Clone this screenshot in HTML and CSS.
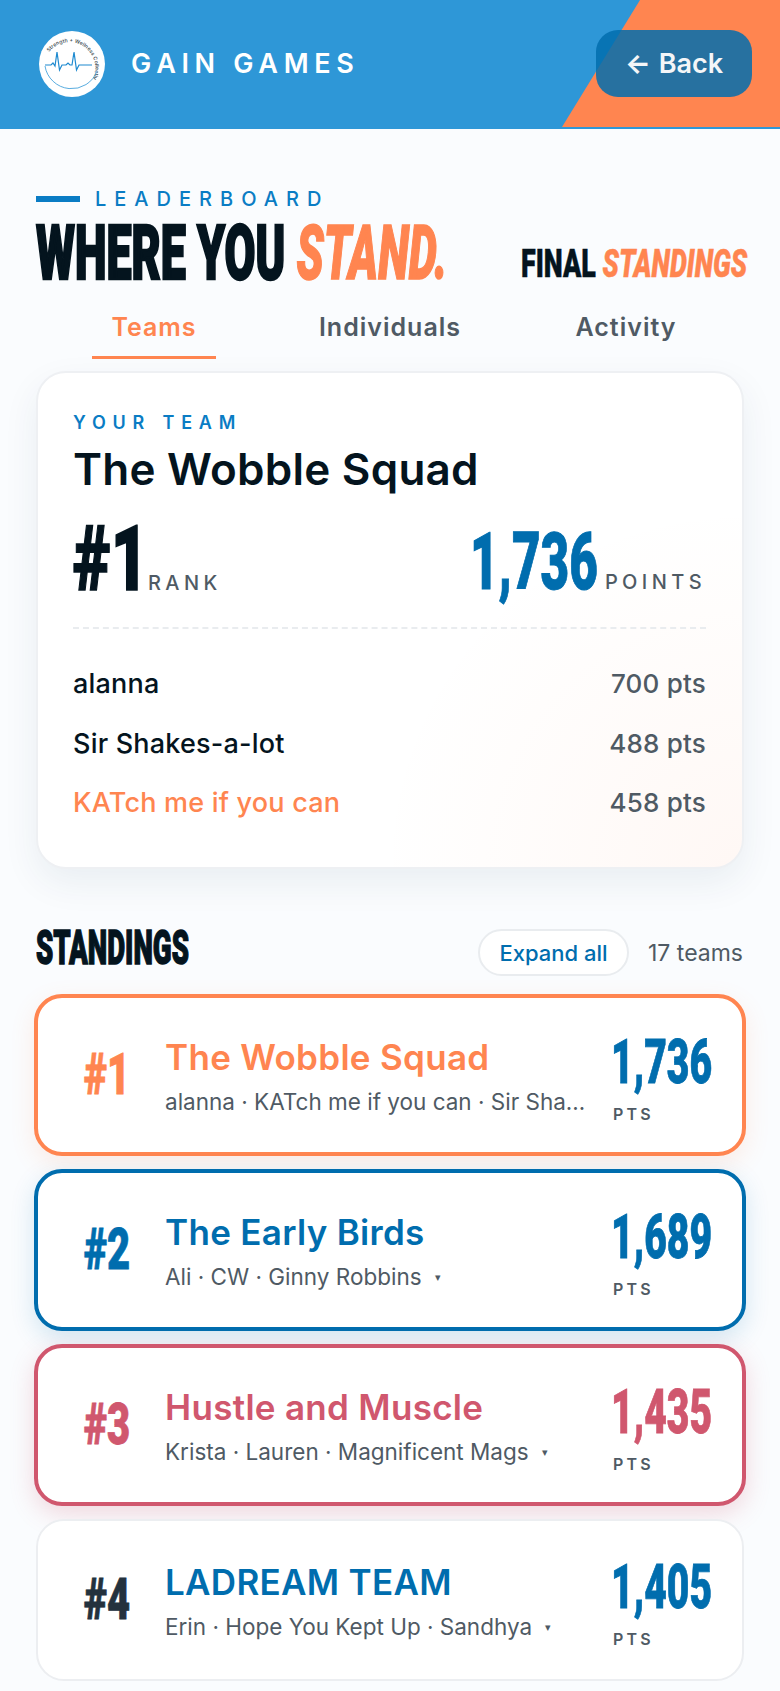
FILE: index.html
```html
<!DOCTYPE html>
<html lang="en">
<head>
<meta charset="utf-8">
<title>Gain Games – Leaderboard</title>
<link rel="stylesheet" href="styles.css">
</head>
<body>
<header class="topbar">
  <div class="brand">
    <svg class="logo" viewBox="0 0 66 66" aria-label="Strength + Wellness Collective">
      <circle cx="33" cy="33" r="33" fill="#fff"/>
      <defs><path id="logo-arc" d="M10 21 A26 26 0 0 1 54 48"/></defs>
      <text class="logo-text"><textPath href="#logo-arc" textLength="78">Strength + Wellness Collective</textPath></text>
      <path class="logo-arc" d="M6 35 A27 27 0 0 0 58 40"/>
      <path class="logo-beat" d="M6 34 H12 L14 32 L16 35 L18 21 L20.5 39 L23 34 H27 L29 32 L31 34 H33 L35 21 L37.5 39 L40 34 H53"/>
    </svg>
    <span class="brand-name">GAIN GAMES</span>
  </div>
  <a class="back-btn"><span class="back-arrow">←</span> Back</a>
</header>

<main class="page">
  <p class="eyebrow">LEADERBOARD</p>
  <div class="title-row">
    <h1 class="title"><span class="cond cond-title">WHERE YOU <em>STAND.</em></span></h1>
    <p class="final"><span class="cond cond-final">FINAL <em>STANDINGS</em></span></p>
  </div>

  <nav class="tabs">
    <a class="tab tab-active">Teams</a>
    <a class="tab">Individuals</a>
    <a class="tab">Activity</a>
  </nav>

  <section class="team-card">
    <p class="team-label">YOUR TEAM</p>
    <h2 class="team-name">The Wobble Squad</h2>
    <div class="team-stats">
      <div class="stat"><span class="stat-big stat-rank"><span class="cond cond-rank">#1</span></span><span class="stat-unit">RANK</span></div>
      <div class="stat"><span class="stat-big stat-blue"><span class="cond cond-pts">1,736</span></span><span class="stat-unit">POINTS</span></div>
    </div>
    <ul class="members">
      <li class="member"><span>alanna</span><span class="member-pts">700 pts</span></li>
      <li class="member"><span>Sir Shakes-a-lot</span><span class="member-pts">488 pts</span></li>
      <li class="member member-me"><span>KATch me if you can</span><span class="member-pts">458 pts</span></li>
    </ul>
  </section>

  <div class="standings-head">
    <h3 class="standings-title"><span class="cond cond-standings">STANDINGS</span></h3>
    <div class="standings-tools">
      <button class="expand">Expand all</button>
      <span class="count">17 teams</span>
    </div>
  </div>

  <div class="rows">
    <article class="row row-orange">
      <div class="rank"><span class="rank-text">#1</span></div>
      <div class="info">
        <div class="name">The Wobble Squad</div>
        <div class="people"><span class="people-text">alanna · KATch me if you can · Sir Shakes-a-lot</span></div>
      </div>
      <div class="score"><div class="score-num"><span class="cond cond-score">1,736</span></div><div class="score-unit">PTS</div></div>
    </article>
    <article class="row row-blue">
      <div class="rank"><span class="rank-text">#2</span></div>
      <div class="info">
        <div class="name">The Early Birds</div>
        <div class="people"><span class="people-text">Ali · CW · Ginny Robbins</span><span class="caret">▾</span></div>
      </div>
      <div class="score"><div class="score-num"><span class="cond cond-score">1,689</span></div><div class="score-unit">PTS</div></div>
    </article>
    <article class="row row-red">
      <div class="rank"><span class="rank-text">#3</span></div>
      <div class="info">
        <div class="name">Hustle and Muscle</div>
        <div class="people"><span class="people-text">Krista · Lauren · Magnificent Mags</span><span class="caret">▾</span></div>
      </div>
      <div class="score"><div class="score-num"><span class="cond cond-score">1,435</span></div><div class="score-unit">PTS</div></div>
    </article>
    <article class="row row-plain">
      <div class="rank"><span class="rank-text">#4</span></div>
      <div class="info">
        <div class="name">LADREAM TEAM</div>
        <div class="people"><span class="people-text">Erin · Hope You Kept Up · Sandhya</span><span class="caret">▾</span></div>
      </div>
      <div class="score"><div class="score-num"><span class="cond cond-score">1,405</span></div><div class="score-unit">PTS</div></div>
    </article>
  </div>
</main>
</body>
</html>
```
FILE: styles.css
```css
* { box-sizing: border-box; }
html, body { margin: 0; padding: 0; }
body {
  background: #fafcfe;
  font-family: Inter, "Noto Sans", sans-serif;
  color: #04141e;
  width: 780px;
  height: 1691px;
  overflow: hidden;
}
p, h1, h2, h3, ul { margin: 0; padding: 0; }

/* condensed display type: Roboto Black squeezed horizontally */
.cond {
  display: block;
  white-space: nowrap;
  transform-origin: 0 50%;
  font-family: Roboto, "Liberation Sans", sans-serif;
  font-weight: 900;
}
.cond-title { transform: scaleX(.59); }
.cond-final { transform: scaleX(.69); }
.cond-rank { transform: scaleX(.72); }
.cond-pts { transform: scaleX(.617); }
.cond-standings { transform: scaleX(.575); }
.cond-score { transform: scaleX(.63); }

.topbar {
  height: 129px;
  padding: 30px 28px 32px 39px;
  display: flex;
  justify-content: space-between;
  align-items: center;
  background: #2e97d7;
  position: relative;
}
.topbar::before {
  content: "";
  position: absolute;
  left: 562px;
  top: 0;
  width: 218px;
  height: 127px;
  background: #ff8550;
  clip-path: polygon(78px 0, 100% 0, 100% 100%, 0 100%);
}
.brand { display: flex; align-items: center; gap: 26px; position: relative; }
.logo { width: 66px; height: 66px; display: block; }
.logo-text { font-family: Inter, sans-serif; font-size: 5.1px; font-weight: 500; fill: #2d3a44; }
.logo-arc { fill: none; stroke: #2e97d7; stroke-width: .8; }
.logo-beat { fill: none; stroke: #1e8ad0; stroke-width: 1.2; }
.brand-name { color: #fff; font-size: 27px; font-weight: 600; letter-spacing: .21em; }
.back-btn {
  position: relative;
  width: 156px;
  height: 67px;
  border-radius: 22px;
  background: rgba(1, 109, 174, .85);
  color: #f4f6f8;
  font-size: 27px;
  font-weight: 600;
  display: flex;
  align-items: center;
  justify-content: center;
  gap: 8px;
}
.back-arrow { font-weight: 700; }

.page { padding: 0 36px; }

.eyebrow {
  display: flex;
  align-items: center;
  gap: 15px;
  margin-top: 58px;
  font-size: 20px;
  line-height: 24px;
  font-weight: 500;
  letter-spacing: 8px;
  color: #0a7cc4;
}
.eyebrow::before {
  content: "";
  width: 44px;
  height: 6px;
  background: #0a7cc4;
}
.title-row {
  display: flex;
  justify-content: space-between;
  align-items: flex-end;
  margin-top: 4px;
  height: 76px;
}
.title {
  width: 420px;
  font-size: 76px;
  line-height: 76px;
  -webkit-text-stroke: 2.5px currentColor;
}
.title em, .final em { color: #ff8550; font-style: italic; }
.title em { -webkit-text-stroke: 1.5px currentColor; }
.final {
  width: 225px;
  margin: 0 -2px 7.5px 0;
  font-size: 39px;
  line-height: 40px;
  -webkit-text-stroke: .5px currentColor;
}

.tabs { display: grid; grid-template-columns: repeat(3, 1fr); margin-top: 12px; }
.tab {
  width: 124px;
  justify-self: center;
  font-size: 25px;
  line-height: 32px;
  font-weight: 600;
  letter-spacing: 1px;
  color: #4f5a64;
  padding: 8px 0 13px;
  white-space: nowrap;
  display: flex;
  justify-content: center;
  border-bottom: 3px solid transparent;
}
.tab-active { color: #ff8550; border-bottom-color: #ff8550; }

.team-card {
  margin-top: 12px;
  width: 708px;
  height: 498px;
  padding: 38px 36px 38px 35px;
  border: 2px solid #eef0f3;
  border-radius: 30px;
  background: radial-gradient(circle at 100% 100%, rgba(255, 133, 80, .06), rgba(255, 133, 80, 0) 42%), #fff;
  box-shadow: 0 14px 36px rgba(20, 50, 80, .07);
}
.team-label { font-size: 18px; line-height: 24px; font-weight: 600; letter-spacing: 6.8px; color: #0a7cc4; }
.team-name { font-size: 44px; line-height: 52px; font-weight: 600; margin-top: 8px; letter-spacing: .25px; }
.team-stats {
  display: flex;
  justify-content: space-between;
  align-items: flex-end;
  margin-top: 36px;
  height: 98px;
  padding-bottom: 32px;
  border-bottom: 2px dashed #e9ecef;
}
.stat { display: flex; align-items: baseline; gap: 7px; }
.stat-big { display: block; line-height: 66px; }
.stat-rank { width: 68px; font-size: 90px; -webkit-text-stroke: 1.5px currentColor; }
.stat-blue { width: 128px; font-size: 80px; color: #006dae; -webkit-text-stroke: 1px currentColor; }
.stat-unit { font-size: 20px; font-weight: 500; letter-spacing: .22em; color: #4f5a64; }
.members { list-style: none; margin-top: 25px; }
.member {
  display: flex;
  justify-content: space-between;
  font-size: 27px;
  line-height: 59.5px;
  font-weight: 500;
  letter-spacing: .2px;
}
.member-pts { color: #4f5a64; font-size: 26px; }
.member-me > span:first-child { color: #ff8550; }

.standings-head {
  display: flex;
  justify-content: space-between;
  align-items: flex-start;
  margin-top: 60px;
  height: 50px;
}
.standings-title {
  width: 152px;
  margin-top: -6px;
  font-size: 48px;
  line-height: 50px;
  -webkit-text-stroke: 1.5px currentColor;
}
.standings-tools { display: flex; align-items: center; gap: 19px; margin-right: 1px; }
.expand {
  width: 151px;
  height: 47px;
  border: 2px solid #e9ecef;
  border-radius: 24px;
  background: #fff;
  color: #006dae;
  font: 500 22px Inter, sans-serif;
  padding: 0;
}
.count { font-size: 23px; color: #4f5a64; }

.rows { display: flex; flex-direction: column; gap: 13px; margin: 15px -2px 0 -2px; }
.row {
  height: 162px;
  margin: 0 2px;
  padding: 0 31px 0 37px;
  display: flex;
  align-items: center;
  border: 2px solid #eceef1;
  border-radius: 28px;
  background: #fff;
  --accent: #006dae;
}
.row-orange, .row-blue, .row-red { margin: 0; padding: 0 31px 0 37px; border-width: 4px; border-color: var(--accent); }
.row-orange { --accent: #ff8550; box-shadow: 0 8px 24px rgba(255, 133, 80, .14); }
.row-blue { --accent: #006dae; box-shadow: 0 8px 24px rgba(0, 109, 174, .16); }
.row-red { --accent: #d0576e; box-shadow: 0 8px 24px rgba(208, 87, 110, .22); }
.row-plain .rank { color: #24323e; }
.rank {
  width: 90px;
  flex: none;
  padding-right: 25px;
  display: flex;
  justify-content: center;
  color: var(--accent);
  -webkit-text-stroke: .8px currentColor;
}
.rank-text {
  flex: none;
  white-space: nowrap;
  font-family: Roboto, "Liberation Sans", sans-serif;
  font-weight: 900;
  font-size: 57px;
  line-height: 60px;
  transform: scaleX(.7);
}
.info { flex: 1; min-width: 0; margin-top: 2px; }
.name { font-size: 35px; line-height: 44px; font-weight: 600; letter-spacing: .3px; color: var(--accent); }
.people { display: flex; align-items: center; margin-top: 8px; font-size: 22.5px; line-height: 30px; color: #4f5a64; }
.people-text { overflow: hidden; text-overflow: ellipsis; white-space: nowrap; }
.caret { font-size: 11px; margin-left: 13px; flex: none; }
.score { width: 98px; flex: none; margin-left: 24px; margin-top: 5px; }
.score-num { font-size: 62px; line-height: 60px; margin-left: -2px; color: #006dae; -webkit-text-stroke: .8px currentColor; }
.row-red .score-num { color: #d0576e; }
.score-unit { font-size: 16px; line-height: 20px; font-weight: 600; letter-spacing: .2em; color: #4f5a64; margin-top: 12px; }
```
